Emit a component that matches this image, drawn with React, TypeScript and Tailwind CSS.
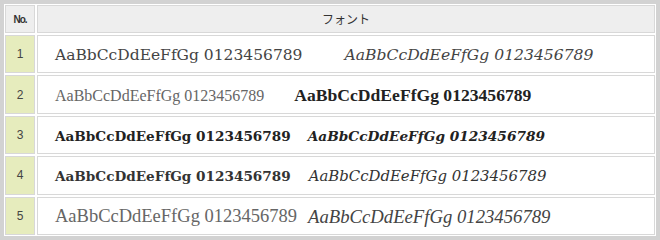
import React from 'react';

type Sample = {
  text: string;
  className: string;
};

type FontRow = {
  no: number;
  first: Sample;
  second: Sample;
  gap: string;
};

const SAMPLE = 'AaBbCcDdEeFfGg 0123456789';

const rows: FontRow[] = [
  {
    no: 1,
    first: { text: SAMPLE, className: "font-['DejaVu_Serif',serif] text-[15.5px] text-[#444]" },
    second: { text: SAMPLE, className: "font-['DejaVu_Serif',serif] italic text-[15.6px] text-[#444]" },
    gap: 'ml-[42px]',
  },
  {
    no: 2,
    first: { text: SAMPLE, className: "font-['Liberation_Serif',serif] text-[16px] text-[#666]" },
    second: { text: SAMPLE, className: "font-['Liberation_Serif',serif] font-bold text-[17.6px] text-[#222]" },
    gap: 'ml-[30px]',
  },
  {
    no: 3,
    first: { text: SAMPLE, className: "font-['DejaVu_Serif',serif] font-bold text-[13.6px] text-[#222]" },
    second: { text: SAMPLE, className: "font-['DejaVu_Serif',serif] font-bold italic text-[13.7px] text-[#222]" },
    gap: 'ml-[17px]',
  },
  {
    no: 4,
    first: { text: SAMPLE, className: "font-['DejaVu_Serif',serif] font-bold text-[13.6px] text-[#333]" },
    second: { text: SAMPLE, className: "font-['DejaVu_Serif',serif] italic text-[14.9px] text-[#333]" },
    gap: 'ml-[18px]',
  },
  {
    no: 5,
    first: { text: SAMPLE, className: "font-['Liberation_Serif',serif] text-[18.5px] text-[#666]" },
    second: { text: SAMPLE, className: "font-['Liberation_Serif',serif] italic text-[18.7px] text-[#444]" },
    gap: 'ml-[11px]',
  },
];

export default function App() {
  return (
    <div className="w-[660px] h-[240px] bg-white">
      <div className="h-full border-[4px] border-[#d2d2d2] bg-white p-px">
        <div className="grid grid-cols-[30px_1fr] grid-rows-[28px_repeat(5,1fr)] gap-[2px] h-full">
          <div className="flex items-center justify-center bg-[#eeeeee] border border-[#d8d8d8] font-['Liberation_Sans',sans-serif] text-[10px] font-bold tracking-[-1px] text-[#333]">
            No.
          </div>
          <div className="flex items-center justify-center bg-[#eeeeee] border border-[#d8d8d8] font-['Noto_Sans_CJK_JP',sans-serif] text-[12px] text-[#333]">
            フォント
          </div>

          {rows.map(row => (
            <React.Fragment key={row.no}>
              <div className="flex items-center justify-center bg-[#e6ecbd] border border-[#d8d8d8] font-['Liberation_Sans',sans-serif] text-[12px] text-[#444]">
                {row.no}
              </div>
              <div className="flex items-center pl-[17px] pt-[2px] border border-[#d8d8d8] whitespace-nowrap">
                <span className={row.first.className}>{row.first.text}</span>
                <span className={`${row.gap} ${row.second.className}`}>{row.second.text}</span>
              </div>
            </React.Fragment>
          ))}
        </div>
      </div>
    </div>
  );
}
